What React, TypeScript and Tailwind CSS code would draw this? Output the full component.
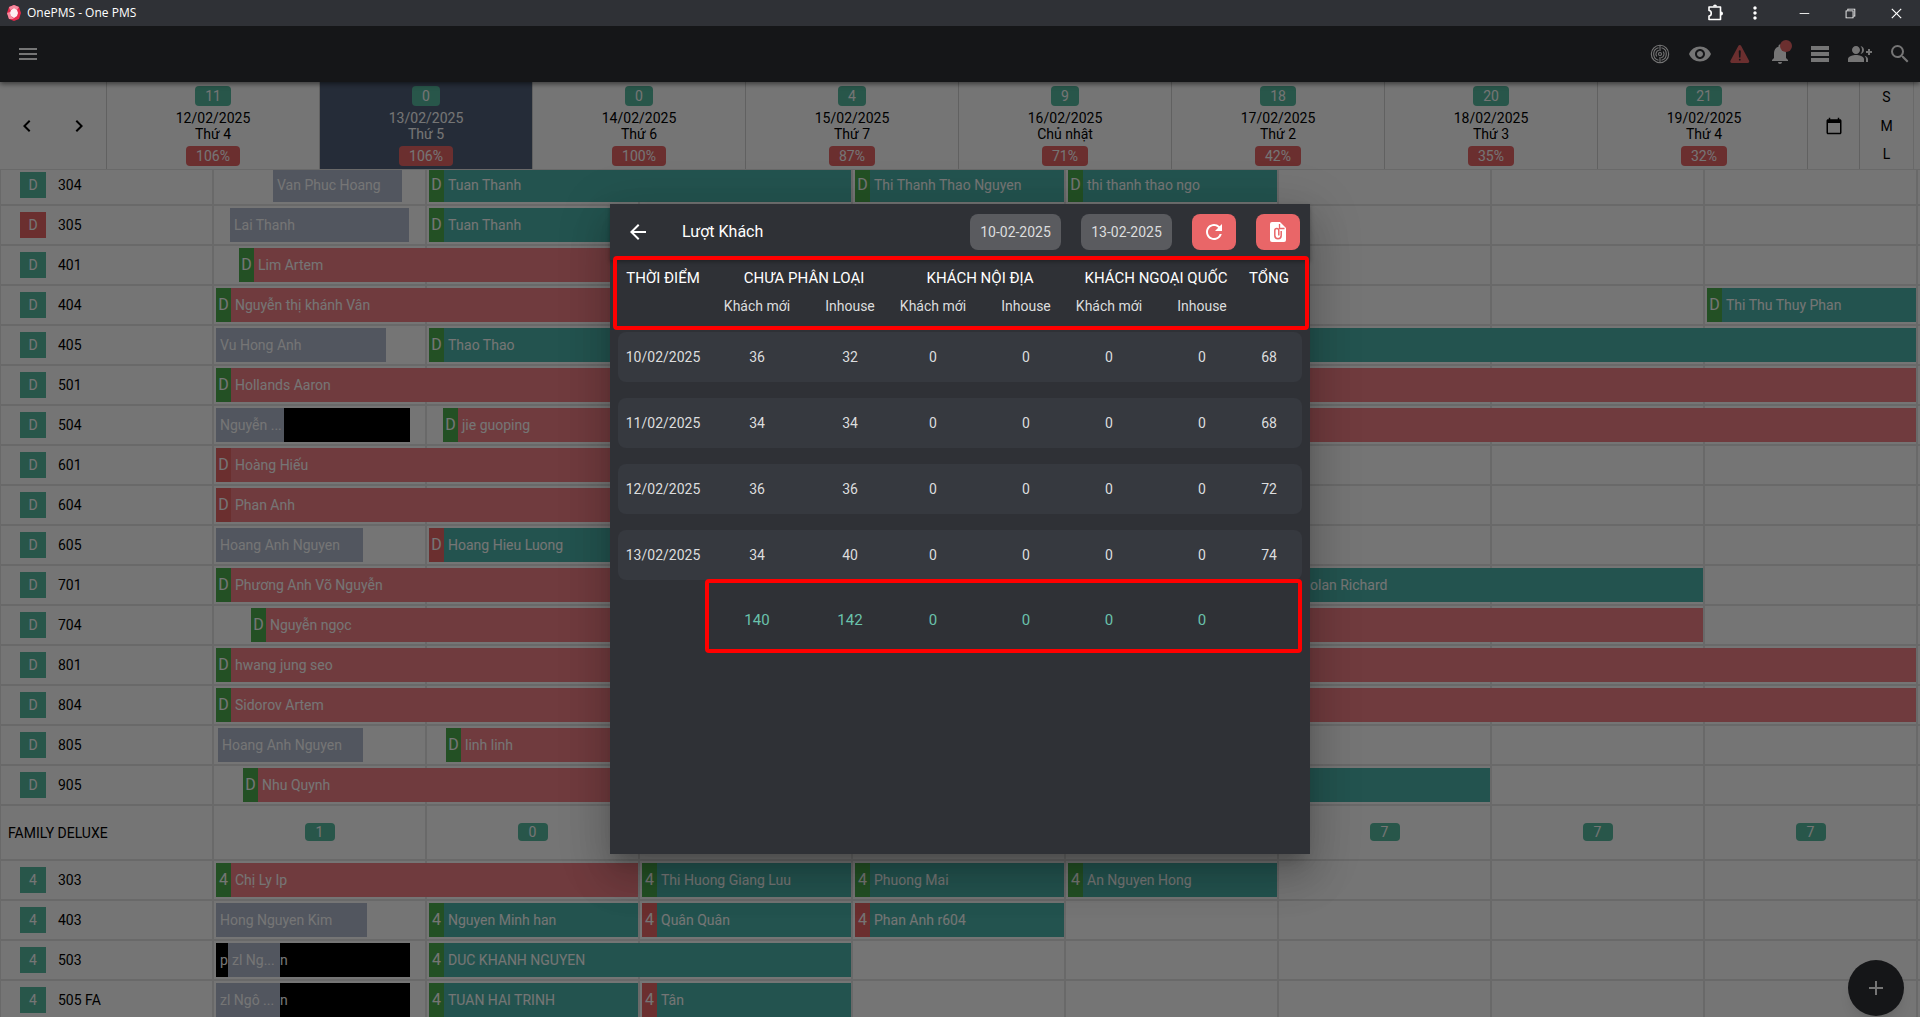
import type { ReactNode } from 'react'
import {
  MdAdd,
  MdArrowBack,
  MdCalendarToday,
  MdChevronLeft,
  MdChevronRight,
  MdGroupAdd,
  MdMenu,
  MdMoreVert,
  MdNotifications,
  MdRefresh,
  MdRemoveRedEye,
  MdSearch,
  MdTableRows,
} from 'react-icons/md'
import { IoWarning } from 'react-icons/io5'
import { VscChromeClose, VscChromeMinimize, VscChromeRestore } from 'react-icons/vsc'

type BarKind = 'in' | 'booked' | 'out' | 'blocked'

interface Booking {
  kind: BarKind
  from: number
  to: number
  name: string
  tag?: 'paid' | 'due'
}

interface Room {
  no: string
  late?: boolean
  bookings: Booking[]
}

// bookings are measured in timeline units, 213 units per day
const TIMELINE_UNITS = 1704

const days = [
  { free: 11, date: '12/02/2025', name: 'Thứ 4', rate: '106%' },
  { free: 0, date: '13/02/2025', name: 'Thứ 5', rate: '106%', today: true },
  { free: 0, date: '14/02/2025', name: 'Thứ 6', rate: '100%' },
  { free: 4, date: '15/02/2025', name: 'Thứ 7', rate: '87%' },
  { free: 9, date: '16/02/2025', name: 'Chủ nhật', rate: '71%' },
  { free: 18, date: '17/02/2025', name: 'Thứ 2', rate: '42%' },
  { free: 20, date: '18/02/2025', name: 'Thứ 3', rate: '35%' },
  { free: 21, date: '19/02/2025', name: 'Thứ 4', rate: '32%' },
]

const deluxeRooms: Room[] = [
  {
    no: '304',
    bookings: [
      { kind: 'out', from: 59, to: 188, name: 'Van Phuc Hoang' },
      { kind: 'booked', from: 215, to: 637, name: 'Tuan Thanh', tag: 'paid' },
      { kind: 'booked', from: 641, to: 850, name: 'Thi Thanh Thao Nguyen', tag: 'paid' },
      { kind: 'booked', from: 854, to: 1063, name: 'thi thanh thao ngo', tag: 'paid' },
    ],
  },
  {
    no: '305',
    late: true,
    bookings: [
      { kind: 'out', from: 16, to: 195, name: 'Lai Thanh' },
      { kind: 'booked', from: 215, to: 637, name: 'Tuan Thanh', tag: 'paid' },
    ],
  },
  { no: '401', bookings: [{ kind: 'in', from: 25, to: 637, name: 'Lim Artem', tag: 'paid' }] },
  {
    no: '404',
    bookings: [
      { kind: 'in', from: 2, to: 637, name: 'Nguyễn thị khánh Vân', tag: 'paid' },
      { kind: 'booked', from: 1493, to: 1702, name: 'Thi Thu Thuy Phan', tag: 'paid' },
    ],
  },
  {
    no: '405',
    bookings: [
      { kind: 'out', from: 2, to: 172, name: 'Vu Hong Anh' },
      { kind: 'booked', from: 215, to: 1702, name: 'Thao Thao', tag: 'paid' },
    ],
  },
  { no: '501', bookings: [{ kind: 'in', from: 2, to: 1702, name: 'Hollands Aaron', tag: 'paid' }] },
  {
    no: '504',
    bookings: [
      { kind: 'out', from: 2, to: 70, name: 'Nguyễn ...' },
      { kind: 'blocked', from: 70, to: 196, name: '' },
      { kind: 'in', from: 229, to: 1702, name: 'jie guoping', tag: 'paid' },
    ],
  },
  { no: '601', bookings: [{ kind: 'in', from: 2, to: 637, name: 'Hoàng Hiếu', tag: 'due' }] },
  { no: '604', bookings: [{ kind: 'in', from: 2, to: 637, name: 'Phan Anh', tag: 'due' }] },
  {
    no: '605',
    bookings: [
      { kind: 'out', from: 2, to: 149, name: 'Hoang Anh Nguyen' },
      { kind: 'booked', from: 215, to: 637, name: 'Hoang Hieu Luong', tag: 'due' },
    ],
  },
  {
    no: '701',
    bookings: [
      { kind: 'in', from: 2, to: 637, name: 'Phương Anh Võ Nguyễn', tag: 'paid' },
      { kind: 'booked', from: 1067, to: 1489, name: 'Nolan Richard', tag: 'paid' },
    ],
  },
  { no: '704', bookings: [{ kind: 'in', from: 37, to: 1489, name: 'Nguyễn ngọc', tag: 'paid' }] },
  { no: '801', bookings: [{ kind: 'in', from: 2, to: 1702, name: 'hwang jung seo', tag: 'paid' }] },
  { no: '804', bookings: [{ kind: 'in', from: 2, to: 1702, name: 'Sidorov Artem', tag: 'paid' }] },
  {
    no: '805',
    bookings: [
      { kind: 'out', from: 4, to: 149, name: 'Hoang Anh Nguyen' },
      { kind: 'in', from: 232, to: 637, name: 'linh linh', tag: 'paid' },
    ],
  },
  {
    no: '905',
    bookings: [
      { kind: 'in', from: 29, to: 637, name: 'Nhu Quynh', tag: 'paid' },
      { kind: 'booked', from: 854, to: 1276, name: '' },
    ],
  },
]

const familyRooms: Room[] = [
  {
    no: '303',
    bookings: [
      { kind: 'in', from: 2, to: 424, name: 'Chị Ly Ip', tag: 'paid' },
      { kind: 'booked', from: 428, to: 637, name: 'Thi Huong Giang Luu', tag: 'paid' },
      { kind: 'booked', from: 641, to: 850, name: 'Phuong Mai', tag: 'paid' },
      { kind: 'booked', from: 854, to: 1063, name: 'An Nguyen Hong', tag: 'paid' },
    ],
  },
  {
    no: '403',
    bookings: [
      { kind: 'out', from: 2, to: 153, name: 'Hong Nguyen Kim' },
      { kind: 'booked', from: 215, to: 424, name: 'Nguyen Minh han', tag: 'paid' },
      { kind: 'booked', from: 428, to: 637, name: 'Quân Quân', tag: 'due' },
      { kind: 'booked', from: 641, to: 850, name: 'Phan Anh r604', tag: 'due' },
    ],
  },
  {
    no: '503',
    bookings: [
      { kind: 'blocked', from: 2, to: 14, name: 'p' },
      { kind: 'out', from: 14, to: 66, name: 'zl Ng...' },
      { kind: 'blocked', from: 66, to: 196, name: 'n' },
      { kind: 'booked', from: 215, to: 637, name: 'DUC KHANH NGUYEN', tag: 'paid' },
    ],
  },
  {
    no: '505 FA',
    bookings: [
      { kind: 'out', from: 2, to: 66, name: 'zl Ngô ...' },
      { kind: 'blocked', from: 66, to: 196, name: 'n' },
      { kind: 'booked', from: 215, to: 424, name: 'TUAN HAI TRINH', tag: 'paid' },
      { kind: 'booked', from: 428, to: 637, name: 'Tân', tag: 'due' },
    ],
  },
]

const familyFree = [1, 0, 0, 3, 5, 7, 7, 7]

const guestRows = [
  { date: '10/02/2025', counts: [36, 32, 0, 0, 0, 0], total: 68 },
  { date: '11/02/2025', counts: [34, 34, 0, 0, 0, 0], total: 68 },
  { date: '12/02/2025', counts: [36, 36, 0, 0, 0, 0], total: 72 },
  { date: '13/02/2025', counts: [34, 40, 0, 0, 0, 0], total: 74 },
]

const guestTotals = [140, 142, 0, 0, 0, 0]

const barColors: Record<BarKind, string> = {
  in: 'bg-[#f58287]',
  booked: 'bg-[#4eb6ac]',
  out: 'bg-[#b2bbcf]',
  blocked: 'bg-black',
}

const tagColors = {
  paid: 'bg-[#4caf50]',
  due: 'bg-[#e96668]',
}

function PuzzleIcon() {
  return (
    <svg width="18" height="18" viewBox="0 0 18 18" fill="none" stroke="currentColor" strokeWidth="1.6">
      <path d="M2 3h11.500v12.500H2v-3.500c3 0 3-5.500 0-5.500z" strokeLinejoin="round" />
      <path d="M6 2.500a2 2 0 0 1 4 0zM14 7.500a2 2 0 0 1 0 4z" fill="currentColor" stroke="none" />
    </svg>
  )
}

function TitleBar() {
  return (
    <div className="flex h-[26px] shrink-0 items-center bg-[#2f3136] pl-[7px] pr-4 text-white">
      <svg width="14" height="16" viewBox="0 0 14 16">
        <path d="M7 0l5 2 2 6-2 6-5 2-5-2-2-6 2-6z" fill="#e5294b" />
        <path d="M7 0l5 2-2 3-3-2-4 2-1-3zM0 8l3-1 1 4 3 3-5 0z" fill="#f78ba0" />
        <path d="M7 3l3 2 1 3-1 3-3 2-3-2-1-3 1-3z" fill="#fdeef1" />
      </svg>
      <span className="ml-1.5 font-['Open_Sans',sans-serif] text-xs">OnePMS - One PMS</span>
      <div className="ml-auto flex items-center">
        <button aria-label="Extensions" className="mr-5"><PuzzleIcon /></button>
        <button aria-label="More" className="mr-8"><MdMoreVert size={20} /></button>
        <button aria-label="Minimize" className="mr-8"><VscChromeMinimize size={14} /></button>
        <button aria-label="Restore" className="mr-8"><VscChromeRestore size={14} /></button>
        <button aria-label="Close"><VscChromeClose size={15} /></button>
      </div>
    </div>
  )
}

function RadarIcon() {
  return (
    <svg width="24" height="24" viewBox="0 0 24 24" fill="none" stroke="currentColor" strokeWidth="1.1">
      <circle cx="12" cy="12" r="8.7" />
      <path d="M10.500 5.800a6.400 6.400 0 0 0 0 12.400M13.500 5.800a6.400 6.400 0 0 1 0 12.400" />
      <path d="M10.800 8.200a4 4 0 0 0-2 6.300M13.200 15.800a4 4 0 0 0 2-6.300" />
      <path d="M12 3v6M12 15v6" />
      <circle cx="12" cy="12" r="1.500" />
    </svg>
  )
}

function AppBar() {
  return (
    <header className="relative z-20 flex h-14 shrink-0 items-center justify-between bg-[#2f3136] pl-4 pr-2 text-white shadow-[0_2px_5px_rgba(0,0,0,0.5)]">
      <button aria-label="Menu"><MdMenu size={24} /></button>
      <div className="flex items-center gap-4 [&_button]:relative">
        <button aria-label="Scan"><RadarIcon /></button>
        <button aria-label="View"><MdRemoveRedEye size={24} /></button>
        <button aria-label="Warnings" className="flex size-6 items-center justify-center text-[#e96668]"><IoWarning size={24} /></button>
        <button aria-label="Notifications">
          <MdNotifications size={24} />
          <span className="absolute -top-0.5 right-0 size-3 rounded-full bg-[#e96668]" />
        </button>
        <button aria-label="List"><MdTableRows size={24} /></button>
        <button aria-label="Add guests"><MdGroupAdd size={24} /></button>
        <button aria-label="Search"><MdSearch size={24} /></button>
      </div>
    </header>
  )
}

function DateHeader() {
  return (
    <div className="relative z-10 grid h-[88px] shrink-0 grid-cols-[107px_repeat(8,minmax(0,1fr))_49px_54px] border-b border-neutral-200 bg-white pr-1.5">
      <div className="flex items-center justify-between border-r border-neutral-300 px-[15px]">
        <button aria-label="Previous"><MdChevronLeft size={24} /></button>
        <button aria-label="Next"><MdChevronRight size={24} /></button>
      </div>
      {days.map((day) => (
        <div
          key={day.date}
          className={`flex flex-col items-center gap-1 border-r border-neutral-300 pt-1 ${
            day.today ? 'bg-[#52617b] text-white' : ''
          }`}
        >
          <span className="rounded bg-[#57bba1] px-2.5 leading-5 text-white">{day.free}</span>
          <span className="text-center leading-4">
            {day.date}
            <br />
            {day.name}
          </span>
          <span className="rounded bg-[#e96668] px-2.5 leading-5 text-white">{day.rate}</span>
        </div>
      ))}
      <button aria-label="Pick date" className="-ml-1 flex items-center justify-center border-x border-neutral-300 bg-white">
        <MdCalendarToday size={18} />
      </button>
      <div className="flex flex-col items-center justify-between border-r border-neutral-200 py-[5px]">
        <button>S</button>
        <button>M</button>
        <button>L</button>
      </div>
    </div>
  )
}

function Row({ label, height, children }: { label: ReactNode; height: string; children: ReactNode }) {
  return (
    <div className={`flex shrink-0 border-b-2 border-neutral-200 pr-0.5 ${height}`}>
      <div className="flex w-[214px] shrink-0 items-center border-l border-r-2 border-neutral-200">{label}</div>
      <div className="relative grid flex-1 grid-cols-8">{children}</div>
    </div>
  )
}

function RoomRow({ room, letter }: { room: Room; letter: string }) {
  return (
    <Row
      height="h-10"
      label={
        <>
          <span
            className={`ml-[19px] mr-3 flex size-[26px] items-center justify-center text-white ${
              room.late ? 'bg-[#e96668]' : 'bg-[#57bba1]'
            }`}
          >
            {letter}
          </span>
          {room.no}
        </>
      }
    >
      {days.map((day) => (
        <div key={day.date} className="border-r-2 border-neutral-200" />
      ))}
      {room.bookings.map((b) => (
        <div
          key={b.from}
          className={`absolute inset-y-0.5 flex items-center overflow-hidden whitespace-nowrap text-white ${barColors[b.kind]}`}
          style={{
            left: `${(b.from / TIMELINE_UNITS) * 100}%`,
            width: `${((b.to - b.from) / TIMELINE_UNITS) * 100}%`,
          }}
        >
          {b.tag && (
            <span className={`flex h-full w-[15px] shrink-0 items-center justify-center text-base ${tagColors[b.tag]}`}>
              {letter}
            </span>
          )}
          <span className={b.name === 'n' ? '' : 'pl-1'}>{b.name}</span>
        </div>
      ))}
    </Row>
  )
}

function FileClipIcon() {
  return (
    <svg width="24" height="24" viewBox="0 0 24 24">
      <path d="M6 2h8l6 6v12a2 2 0 0 1-2 2H6a2 2 0 0 1-2-2V4a2 2 0 0 1 2-2z" fill="white" />
      <path d="M13.500 4v4.500H18.500" fill="none" stroke="#e96668" strokeWidth="1.300" />
      <path
        d="M15.200 11v4.500a3.200 3.200 0 0 1-6.400 0v-5a2 2 0 0 1 4 0v5"
        fill="none"
        stroke="#e96668"
        strokeWidth="1.500"
      />
    </svg>
  )
}

// new-guest columns lean left and in-house columns lean right inside each pair
const pairPadding = (i: number) => (i % 2 === 0 ? 'pr-1.5' : 'pl-1')
const tableGrid = 'grid grid-cols-[98px_repeat(6,minmax(0,1fr))_58px] items-center text-center'

function GuestDialog() {
  return (
    <div
      role="dialog"
      aria-label="Lượt Khách"
      className="flex h-[650px] w-full max-w-[700px] flex-col bg-[#2f3136] text-[#dcddde] shadow-[0_11px_15px_-7px_rgba(0,0,0,0.2),0_24px_38px_3px_rgba(0,0,0,0.14),0_9px_46px_8px_rgba(0,0,0,0.12)]"
    >
      <div className="flex h-14 shrink-0 items-center gap-5 pl-4 pr-2.5 shadow-[0_2px_4px_rgba(0,0,0,0.3)]">
        <button aria-label="Back" className="mr-3 text-white"><MdArrowBack size={24} /></button>
        <h2 className="mr-auto text-base text-white">Lượt Khách</h2>
        <button className="h-9 w-[91px] rounded-lg bg-[#5a5b5f]">10-02-2025</button>
        <button className="h-9 w-[91px] rounded-lg bg-[#5a5b5f]">13-02-2025</button>
        <button aria-label="Refresh" className="flex h-9 w-11 items-center justify-center rounded-lg bg-[#e96668] text-white">
          <MdRefresh size={24} />
        </button>
        <button aria-label="Export" className="flex h-9 w-11 items-center justify-center rounded-lg bg-[#e96668]">
          <FileClipIcon />
        </button>
      </div>

      <table className="block">
        <thead className="relative block px-2 pb-3 pt-1.5">
          <tr className={`${tableGrid} h-[27px] whitespace-nowrap text-[15px] text-white`}>
            <th className="pr-2 font-normal">THỜI ĐIỂM</th>
            <th colSpan={2} className="col-span-2 font-normal">CHƯA PHÂN LOẠI</th>
            <th colSpan={2} className="col-span-2 font-normal">KHÁCH NỘI ĐỊA</th>
            <th colSpan={2} className="col-span-2 font-normal">KHÁCH NGOẠI QUỐC</th>
            <th className="pr-2 font-normal">TỔNG</th>
          </tr>
          <tr className={`${tableGrid} h-[27px]`}>
            <td />
            {guestTotals.map((_, i) => (
              <th key={i} className={`font-normal ${pairPadding(i)}`}>
                {i % 2 === 0 ? 'Khách mới' : 'Inhouse'}
              </th>
            ))}
            <td className="absolute -top-1 bottom-0.5 left-[3px] right-px rounded border-4 border-[#ff0000]" />
          </tr>
        </thead>
        <tbody className="flex flex-col gap-4 px-2">
          {guestRows.map((row) => (
            <tr key={row.date} className={`${tableGrid} h-[50px] rounded-lg bg-[#36393f]`}>
              <td className="pr-2">{row.date}</td>
              {row.counts.map((count, i) => (
                <td key={i} className={pairPadding(i)}>{count}</td>
              ))}
              <td className="pr-2">{row.total}</td>
            </tr>
          ))}
          <tr className={`${tableGrid} relative h-[50px] text-[15px] text-[#6ac2ac]`}>
            <td />
            {guestTotals.map((count, i) => (
              <td key={i} className={pairPadding(i)}>{count}</td>
            ))}
            <td className="absolute -bottom-[7px] -top-[17px] left-[87px] right-0 rounded border-4 border-[#ff0000]" />
          </tr>
        </tbody>
      </table>
    </div>
  )
}

export default function App() {
  return (
    <div className="flex h-screen flex-col overflow-hidden bg-white font-[Roboto,sans-serif] text-sm text-black">
      <TitleBar />
      <div className="relative flex min-h-0 flex-1 flex-col overflow-hidden">
        <AppBar />
        <DateHeader />

        {/* Timeline */}
        <main className="-mt-1 flex min-h-0 flex-1 flex-col overflow-hidden">
          {deluxeRooms.map((room) => (
            <RoomRow key={room.no} room={room} letter="D" />
          ))}
          <Row height="h-[55px]" label={<span className="pl-[7px]">FAMILY DELUXE</span>}>
            {familyFree.map((free, i) => (
              <div key={i} className="flex items-center justify-center border-r-2 border-neutral-200 pb-0.5">
                <span className="w-[30px] rounded bg-[#57bba1] text-center leading-[18px] text-white">{free}</span>
              </div>
            ))}
          </Row>
          {familyRooms.map((room) => (
            <RoomRow key={room.no} room={room} letter="4" />
          ))}
        </main>

        <button
          aria-label="Add"
          className="absolute bottom-px right-4 flex size-14 items-center justify-center rounded-full bg-[#2f3136] text-white shadow-lg"
        >
          <MdAdd size={24} />
        </button>

        {/* Guest count dialog */}
        <div className="absolute inset-0 z-30 flex items-center justify-center bg-black/54 pt-3.5">
          <GuestDialog />
        </div>
      </div>
    </div>
  )
}
